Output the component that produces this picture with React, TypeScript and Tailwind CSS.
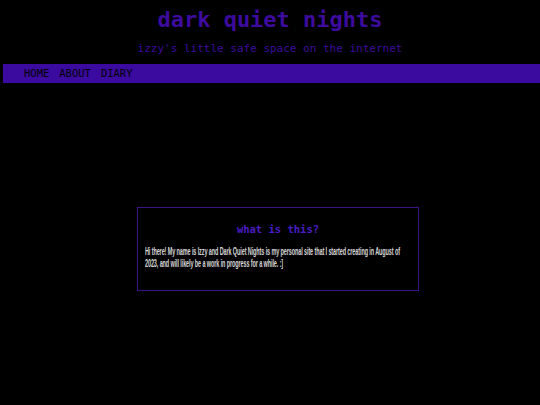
export default function App() {
  const mono = { fontFamily: '"DejaVu Sans Mono", "Liberation Mono", monospace' };
  return (
    <div className="min-h-[405px] w-[540px] overflow-hidden bg-black" style={mono}>
      <header className="flex flex-col items-center pt-[9px]">
        <h1 className="text-[22px] leading-[22px] font-bold text-[#3d0b9e]">dark quiet nights</h1>
        <p className="mt-[11px] text-[11px] leading-[14px] text-[#3d0b9e]">izzy's little safe space on the internet</p>
      </header>

      <nav className="mt-[8px] ml-[3px] flex h-[19px] items-center gap-[10px] bg-[#3b0a9f] pl-[21px] text-[10.5px] text-black">
        <a>HOME</a>
        <a>ABOUT</a>
        <a>DIARY</a>
      </nav>

      <section className="mt-[124px] ml-[137px] w-[282px] border border-[#3a1487] pt-[14px] pb-[20px]">
        <h2 className="text-center text-[10.5px] leading-[14px] font-bold text-[#4a1cc4]">what is this?</h2>
        <div className="mt-[10px] pl-[7px]">
          <p
            className="w-[480px] origin-left scale-x-[0.55] text-[10px] leading-[12px] font-bold tracking-[-0.2px] text-[#d6d6d6]"
            style={{ fontFamily: '"Liberation Sans", Arial, sans-serif' }}
          >
            Hi there! My name is Izzy and Dark Quiet Nights is my personal site that I started creating in August of 2023, and will likely be a work in progress for a while. :]
          </p>
        </div>
      </section>
    </div>
  );
}
